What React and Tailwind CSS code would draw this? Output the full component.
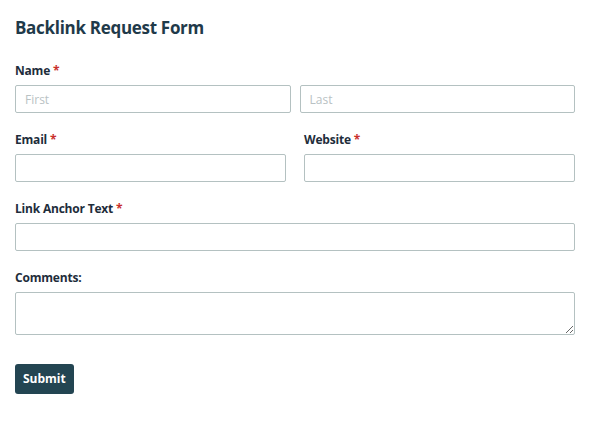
export default function App() {
  const font = { fontFamily: '"Open Sans", "Noto Sans", sans-serif' };
  const input =
    "block w-full h-[28px] border border-[#b4c1c1] rounded-[2px] bg-white px-[9px] text-[12px] text-[#333] placeholder:text-[#b9c2c4] outline-none";

  const Label = ({ children, req }) => (
    <label className="block text-[12px] font-bold text-[#1e2d3b] leading-[16px] mb-[6px] tracking-[-0.2px]">
      {children}
      {req && <span className="text-[#c9302c] ml-[3px]">*</span>}
    </label>
  );

  return (
    <div className="min-h-screen bg-white px-[15px] pt-[16px]" style={font}>
      <h1 className="text-[17px] font-bold text-[#1f3a4a] leading-[24px] tracking-[-0.3px]">
        Backlink Request Form
      </h1>

      <form className="mt-[23px]" onSubmit={(e) => e.preventDefault()}>
        <div>
          <Label req>Name</Label>
          <div className="flex gap-[9px]">
            <input className={input} placeholder="First" />
            <input className={input} placeholder="Last" />
          </div>
        </div>

        <div className="mt-[19px] flex gap-[18px]">
          <div className="flex-1">
            <Label req>Email</Label>
            <input className={input} />
          </div>
          <div className="flex-1">
            <Label req>Website</Label>
            <input className={input} />
          </div>
        </div>

        <div className="mt-[19px]">
          <Label req>Link Anchor Text</Label>
          <input className={input} />
        </div>

        <div className="mt-[19px]">
          <Label>Comments:</Label>
          <textarea className="block w-full h-[43px] border border-[#b4c1c1] rounded-[2px] bg-white px-[9px] py-[4px] text-[12px] outline-none" />
        </div>

        <button
          type="submit"
          className="mt-[29px] h-[30px] px-[8px] bg-[#234552] text-white text-[12px] font-bold rounded-[3px]"
        >
          Submit
        </button>
      </form>
    </div>
  );
}
